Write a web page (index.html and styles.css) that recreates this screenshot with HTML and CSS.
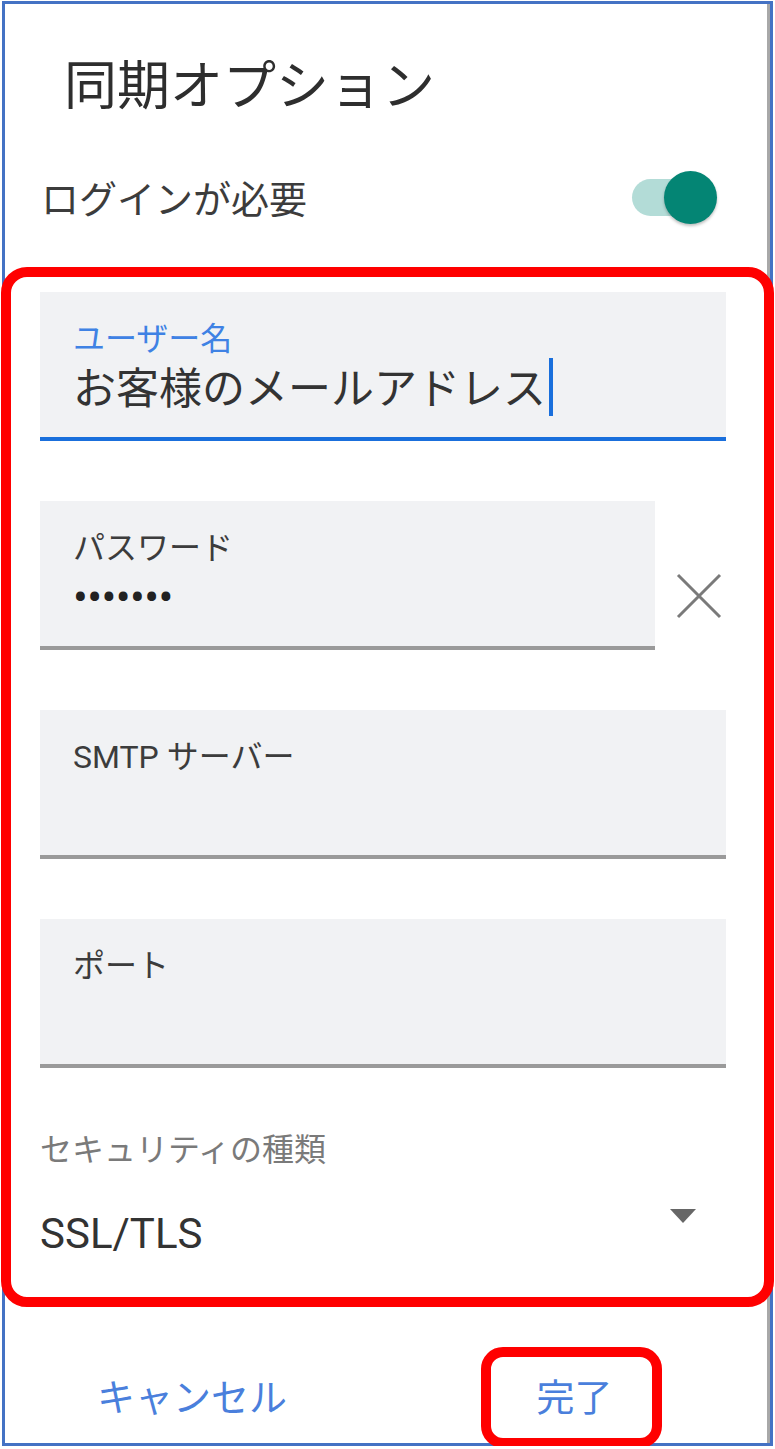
FILE: index.html
```html
<!DOCTYPE html>
<html lang="ja">
<head>
  <meta charset="UTF-8" />
  <meta name="viewport" content="width=device-width, initial-scale=1.0"/>
  <title>同期オプション</title>
  <link rel="stylesheet" href="styles.css">
</head>
<body>

  <div class="frame">
    <h1 class="title">同期オプション</h1>

    <div class="setting-row">
      <span class="setting-label">ログインが必要</span>
      <div class="switch">
        <span class="switch-track"></span>
        <span class="switch-thumb"></span>
      </div>
    </div>

    <section class="highlight">
      <div class="field field-active">
        <div class="field-label">ユーザー名</div>
        <div class="field-value">お客様のメールアドレス<span class="caret"></span></div>
      </div>

      <div class="field-row">
        <div class="field">
          <div class="field-label">パスワード</div>
          <div class="field-value dots">•••••••</div>
        </div>
        <svg class="clear-icon" width="46" height="46" viewBox="0 0 46 46">
          <path d="M2 2 L44 44 M44 2 L2 44" stroke="#7a7a7a" stroke-width="3" fill="none"/>
        </svg>
      </div>

      <div class="field">
        <div class="field-label">SMTP サーバー</div>
      </div>

      <div class="field">
        <div class="field-label">ポート</div>
      </div>

      <div class="select">
        <div class="select-label">セキュリティの種類</div>
        <div class="select-row">
          <span class="select-value">SSL/TLS</span>
          <span class="select-arrow"></span>
        </div>
      </div>
    </section>

    <div class="actions">
      <button class="btn btn-cancel">キャンセル</button>
      <div class="btn-mark">
        <button class="btn btn-done">完了</button>
      </div>
    </div>
  </div>

</body>
</html>
```

FILE: styles.css
```css
body {
  margin: 0;
  font-family: Roboto, "Noto Sans CJK JP", sans-serif;
  background: #fff;
  color: #3a3a3a;
}
.frame {
  box-sizing: border-box;
  margin: 1px 0 0 2px;
  width: 771px;
  height: 1445px;
  border: 3px solid #4472c4;
  box-shadow: inset -3px 0 0 #a8a8a8;
  background: #fff;
}
.title {
  margin: 0;
  padding: 52px 0 0 59px;
  font-size: 53px;
  line-height: 62px;
  font-weight: 400;
  color: #2e2e2e;
}
.setting-row {
  margin-top: 52px;
  height: 60px;
  padding: 0 53px 0 36px;
  display: flex;
  align-items: center;
  justify-content: space-between;
}
.setting-label {
  font-size: 38px;
  line-height: 60px;
  color: #3c3c3c;
}
.switch {
  display: flex;
  align-items: center;
  margin-bottom: 5px;
}
.switch-track {
  width: 70px;
  height: 37px;
  border-radius: 19px;
  background: #b3dcd7;
}
.switch-thumb {
  width: 53px;
  height: 53px;
  border-radius: 50%;
  background: #048574;
  margin-left: -38px;
  box-shadow: 0 2px 3px rgba(0, 0, 0, 0.25);
}
.highlight {
  margin: 37px -4px 0;
  border: 10px solid #ff0000;
  border-radius: 26px;
  padding: 15px 38px 38px 29px;
}
.field {
  box-sizing: border-box;
  height: 149px;
  padding: 28px 33px 0;
  background: #f1f2f4;
  border-bottom: 4px solid #9a9a9a;
}
.field + .field,
.field + .field-row,
.field-row + .field {
  margin-top: 60px;
}
.field-active {
  border-bottom-color: #1a6fdc;
}
.field-label {
  font-size: 32px;
  line-height: 38px;
  color: #3c3c3c;
}
.field-active .field-label {
  color: #3f82e4;
}
.field-value {
  margin-top: 6px;
  font-size: 43px;
  line-height: 50px;
  color: #333;
}
.caret {
  display: inline-block;
  width: 4px;
  height: 58px;
  margin: -10px 0 0 3px;
  vertical-align: -12px;
  background: #1a6fdc;
}
.dots {
  font-size: 44px;
  letter-spacing: -0.6px;
  color: #222;
}
.field-row {
  display: flex;
  align-items: flex-start;
}
.field-row .field {
  flex: 1;
}
.clear-icon {
  margin: 72px 4px 0 21px;
}
.select {
  margin-top: 63px;
}
.select-label {
  font-size: 32px;
  line-height: 38px;
  color: #7a7a7a;
}
.select-row {
  margin-top: 40px;
  display: flex;
  justify-content: space-between;
  align-items: flex-start;
  padding-right: 30px;
}
.select-value {
  font-size: 42px;
  line-height: 50px;
  color: #333;
}
.select-arrow {
  width: 0;
  height: 0;
  border-left: 13px solid transparent;
  border-right: 13px solid transparent;
  border-top: 14px solid #666;
}
.actions {
  margin-top: 40px;
  padding: 0 108px 0 92px;
  display: flex;
  align-items: center;
  justify-content: space-between;
}
.btn {
  border: none;
  background: none;
  padding: 0;
  font-family: inherit;
  font-size: 38px;
  line-height: 50px;
  color: #4a7fdc;
  cursor: pointer;
}
.btn-done {
  padding-left: 6px;
}
.btn-mark {
  box-sizing: border-box;
  width: 181px;
  height: 101px;
  border: 10px solid #ff0000;
  border-radius: 22px;
  display: flex;
  align-items: center;
  justify-content: center;
}
```
